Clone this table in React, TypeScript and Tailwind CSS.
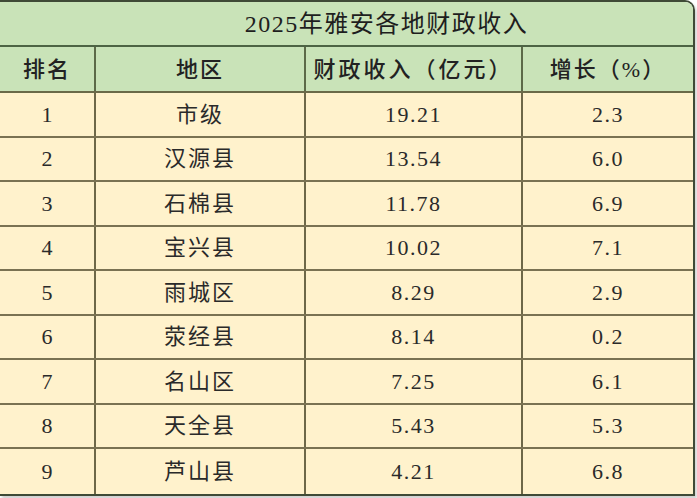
const rows = [
  { rank: 1, area: "市级", income: "19.21", growth: "2.3" },
  { rank: 2, area: "汉源县", income: "13.54", growth: "6.0" },
  { rank: 3, area: "石棉县", income: "11.78", growth: "6.9" },
  { rank: 4, area: "宝兴县", income: "10.02", growth: "7.1" },
  { rank: 5, area: "雨城区", income: "8.29", growth: "2.9" },
  { rank: 6, area: "荥经县", income: "8.14", growth: "0.2" },
  { rank: 7, area: "名山区", income: "7.25", growth: "6.1" },
  { rank: 8, area: "天全县", income: "5.43", growth: "5.3" },
  { rank: 9, area: "芦山县", income: "4.21", growth: "6.8" },
];

const font = {
  fontFamily: '"Liberation Serif", "Noto Sans CJK SC", serif',
};

export default function App() {
  return (
    <div className="w-[697px] h-[498px] bg-white" style={font}>
      <div className="w-[695px] overflow-hidden rounded-tr-[10px] border-t-[2px] border-r-[2px] border-b-[2px] border-[#3f4a36] shadow-[2px_3px_3px_rgba(0,0,0,0.18)]">
        <div className="flex h-[45px] items-center bg-[#c9e3b8] pl-[80px] justify-center border-b-[2px] border-[#4d6444]">
          <span className="text-[24px] tracking-[1.5px] text-[#1e1e1e]">2025年雅安各地财政收入</span>
        </div>
        <div className="grid grid-cols-[96px_210px_217px_1fr] h-[46px] bg-[#c9e3b8] border-b-[2px] border-[#6a6a48] text-[22px] font-medium text-[#222] tracking-[2px]">
          <div className="flex items-center justify-center border-r-[2px] border-[#5c6a48]">排名</div>
          <div className="flex items-center justify-center border-r-[2px] border-[#5c6a48]">地区</div>
          <div className="flex items-center justify-center border-r-[2px] border-[#5c6a48] tracking-[3px]">财政收入（亿元）</div>
          <div className="flex items-center justify-center">增长（%）</div>
        </div>
        {rows.map((r, i) => (
          <div
            key={r.rank}
            className={
              "grid grid-cols-[96px_210px_217px_1fr] h-[44.5px] bg-[#fff2cc] text-[22px] text-[#2a2a2a] " +
              (i < rows.length - 1 ? "border-b-[2px] border-[#7a7252]" : "")
            }
          >
            <div className="flex items-center justify-center border-r-[2px] border-[#6e6848]">{r.rank}</div>
            <div className="flex items-center justify-center border-r-[2px] border-[#6e6848] tracking-[2px]">{r.area}</div>
            <div className="flex items-center justify-center border-r-[2px] border-[#6e6848] tracking-[1.5px]">{r.income}</div>
            <div className="flex items-center justify-center tracking-[1.5px]">{r.growth}</div>
          </div>
        ))}
      </div>
    </div>
  );
}
